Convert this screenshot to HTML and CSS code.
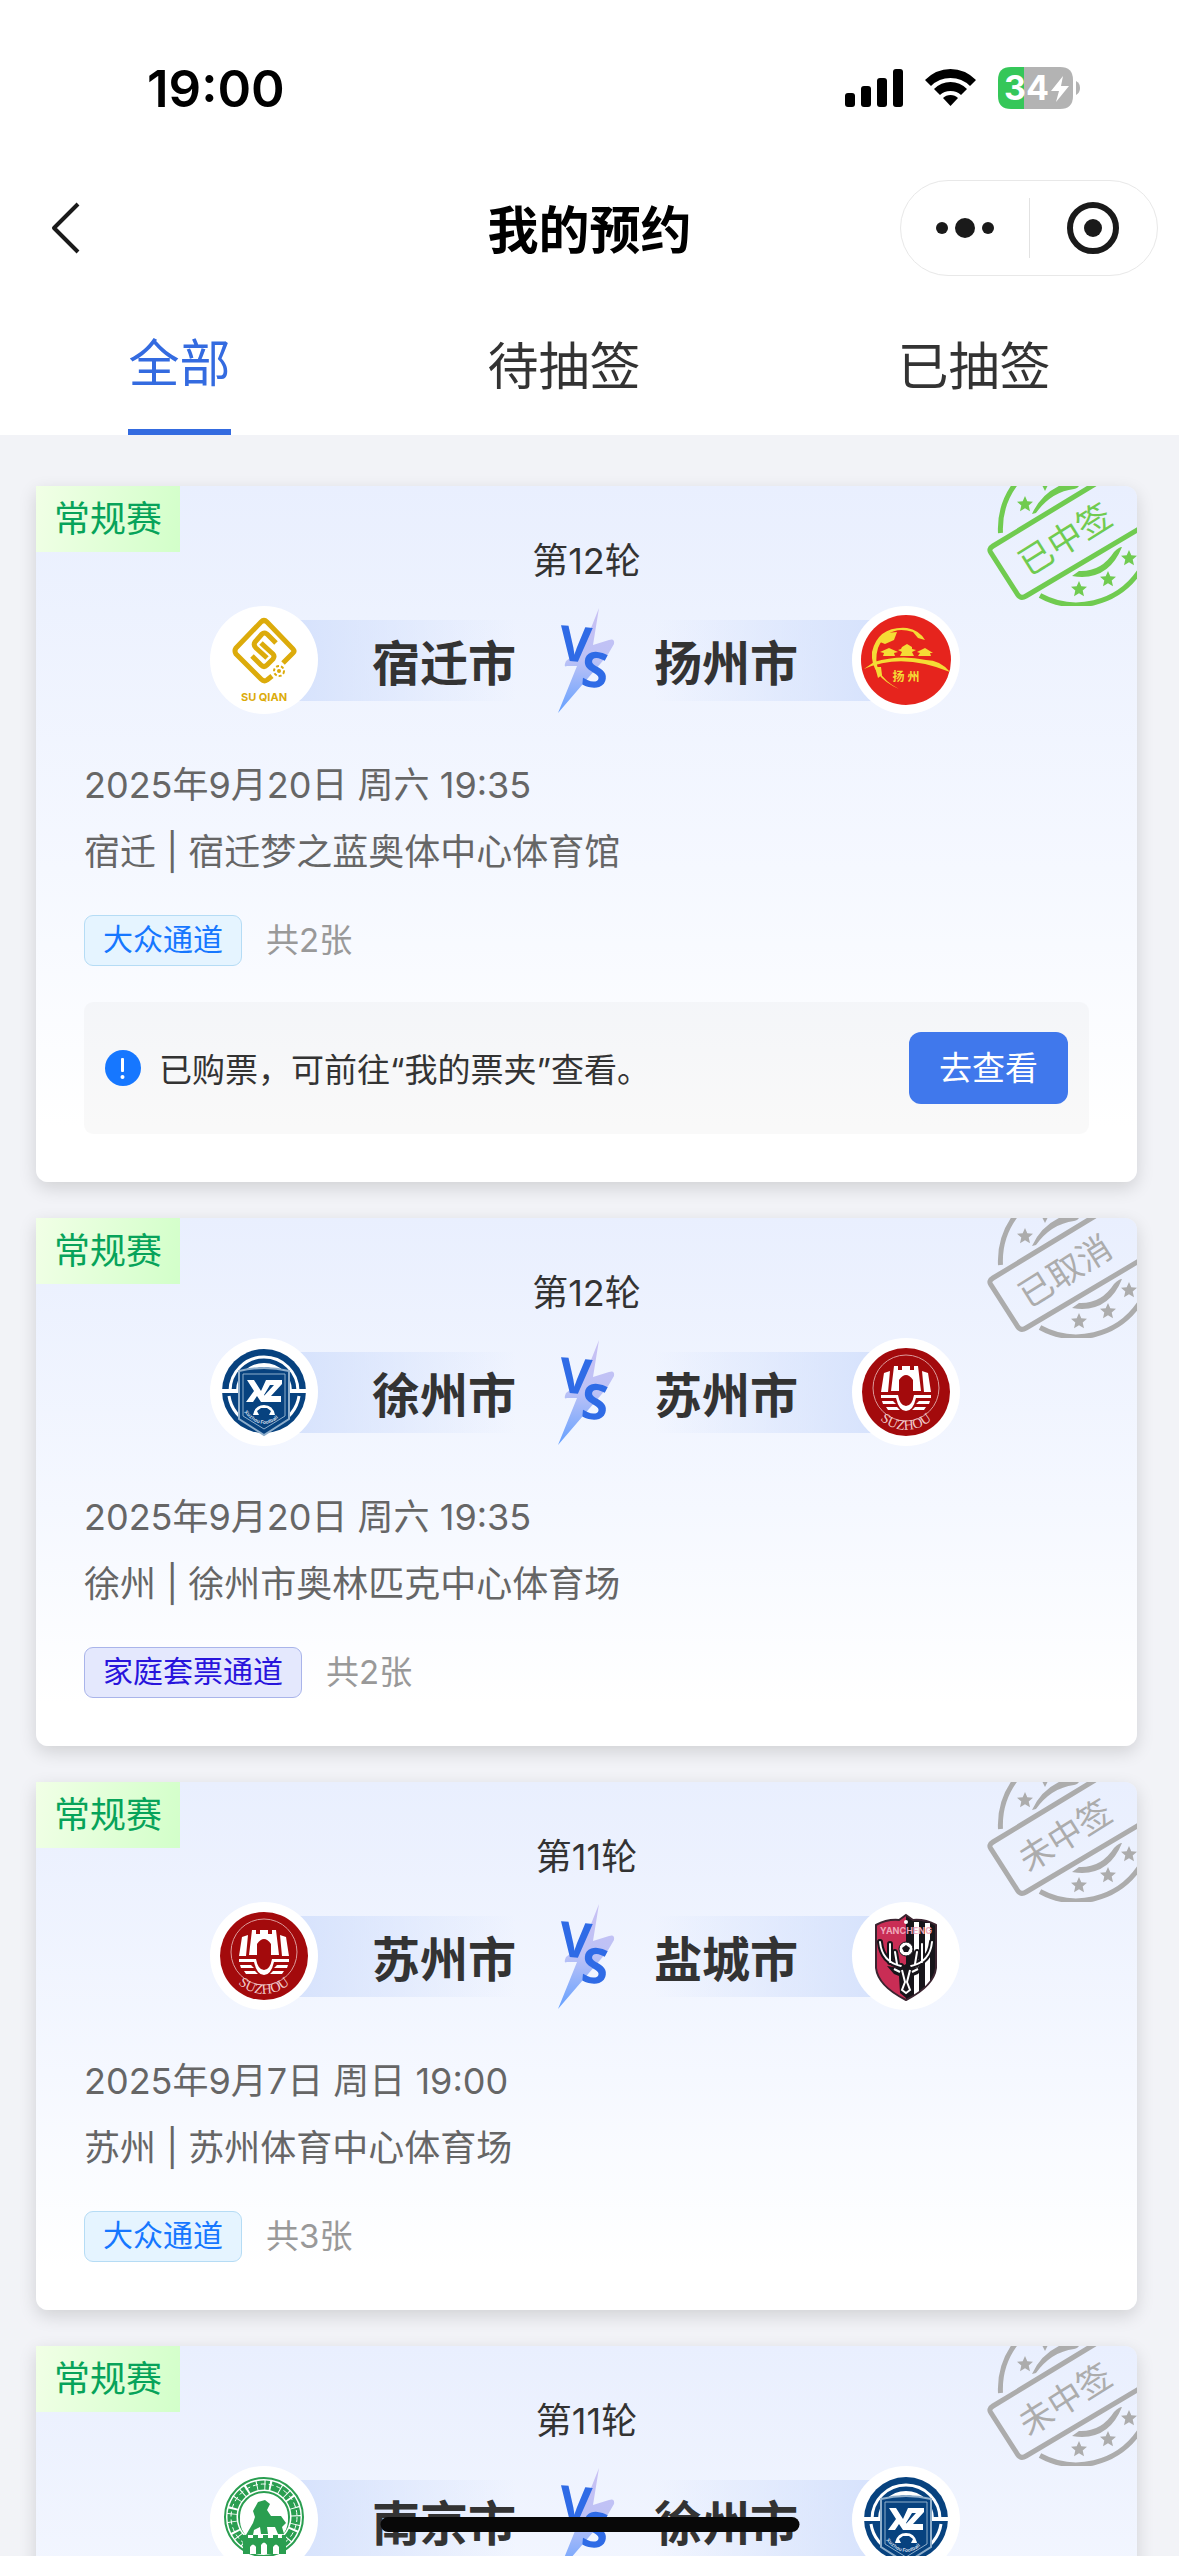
FILE: index.html
```html
<!DOCTYPE html>
<html lang="zh-CN">
<head>
    <meta charset="UTF-8">
    <title>我的预约</title>
    <meta name="viewport" content="width=device-width, initial-scale=1.0">
    <link rel="stylesheet" href="styles.css">
</head>
<body>

    <!-- gradients stop working inside display: none, so this one stays rendered -->
    <svg class="gradients" aria-hidden="true">
        <defs>
            <linearGradient id="boltFill" x1="0" y1="0" x2="0" y2="1">
                <stop offset="0" stop-color="#c9c0f3"/>
                <stop offset="0.5" stop-color="#bcc2f6"/>
                <stop offset="1" stop-color="#64a0ff"/>
            </linearGradient>
        </defs>
    </svg>

    <!-- shared graphics -->
    <svg class="sprites" aria-hidden="true">
        <defs>
            <path id="szArc" d="M18 66 A38 38 0 0 0 90 66"/>
            <path id="xzArc" d="M34 74 Q54 98 74 74"/>
            <path id="star" d="M0 -8 L2.3 -2.8 L8 -2.3 L3.7 1.5 L5 7.2 L0 4.2 L-5 7.2 L-3.7 1.5 L-8 -2.3 L-2.3 -2.8 Z"/>
        </defs>

        <symbol id="vs" viewBox="0 0 60 108">
            <path d="M44 2 L28 42 L11 55 Q8 62 12 60 L22 60 L3 107 L52 50 L59 38 Q60 32 54 34 L38 39 Z" fill="url(#boltFill)"/>
            <text class="vs-text" transform="translate(3 54) rotate(5)">V</text>
            <text class="vs-text" transform="translate(25 80) rotate(5)">S</text>
        </symbol>

        <symbol id="stamp" viewBox="0 0 150 120">
            <g fill="none" stroke="currentColor" stroke-width="5">
                <path d="M13.500 47 A76 76 0 0 1 29 -3"/>
                <path d="M53 109.500 A76 76 0 0 0 152 86"/>
                <path d="M108 -2 L6 60 Q1 63 4 67 L31 109 Q34 113 39 110 L152 43"/>
            </g>
            <g fill="currentColor">
                <path d="M45 28 Q54 8 74 -1 L92 -1 Q92 2 87 3 Q64 6 49 27 Z"/>
                <path d="M55 -1 L61 -1 L58 5 Z"/>
                <path d="M85 90 L92 85 Q114 86 127 66 Q132 61 135 61 Q121 96 85 90 Z"/>
                <use href="#star" x="38" y="18"/>
                <use href="#star" x="92" y="103"/>
                <use href="#star" x="121" y="93"/>
                <use href="#star" x="142" y="72"/>
            </g>
        </symbol>

        <!-- Suqian -->
        <symbol id="logo-sq" viewBox="0 0 108 108">
            <circle cx="54" cy="54" r="54" fill="#fff"/>
            <g fill="none" stroke="#dcab0b" stroke-width="5" stroke-linejoin="round">
                <path d="M73 57 L83 47 Q85 45 83 43 L57 16 Q54 13 51 16 L26 42 Q24 45 26 48 L51 73 Q54 76 57 74 L62 70"/>
                <path d="M66 37 L57 28 Q54 26 52 28 L45 36 Q43 39 46 42 L57 52"/>
                <path d="M51 37 L63 48 Q65 50 63 53 L57 59 Q54 62 51 59 L42 50"/>
            </g>
            <circle cx="69" cy="65" r="5" fill="#fff" stroke="#dcab0b" stroke-width="2" stroke-dasharray="3 2"/>
            <circle cx="69" cy="65" r="2" fill="#dcab0b"/>
            <text x="54" y="95" text-anchor="middle" class="logo-text" font-size="11" fill="#dcab0b">SU QIAN</text>
        </symbol>

        <!-- Yangzhou -->
        <symbol id="logo-yz" viewBox="0 0 108 108">
            <circle cx="54" cy="54" r="54" fill="#fff"/>
            <circle cx="54" cy="54" r="45" fill="#e6241d"/>
            <g fill="#f5dc35">
                <path d="M47 83 Q18 70 20 46 Q26 20 55 22 Q67 24 73 34 L66 32 L61 26 Q36 18 26 42 Q18 68 47 83 Z"/>
                <path d="M28 36 L34 27 L45 26 L42 34 L33 38 Z"/>
                <path d="M12 63 Q50 46 98 66 Q88 54 74 54 Q48 48 22 56 Z"/>
                <path d="M31 50 L43 50 L42 47 L46 46 L37 42 L28 46 L32 47 Z"/>
                <path d="M48 50 L62 50 L60 46 L64 44 L60 43 L60 41 L55 38 L50 41 L49 43 L46 44 L50 46 Z"/>
                <path d="M66 50 L79 50 L78 47 L81 47 L73 42 L65 46 L68 47 Z"/>
                <path d="M23 61 L29 61 L30 69 L26 72 Z"/>
                <text x="54" y="75" text-anchor="middle" class="logo-text" font-size="12">扬 州</text>
            </g>
        </symbol>

        <!-- Xuzhou -->
        <symbol id="logo-xz" viewBox="0 0 108 108">
            <circle cx="54" cy="54" r="54" fill="#fff"/>
            <circle cx="54" cy="53" r="42" fill="#07427f"/>
            <g fill="none" stroke="#fff">
                <path d="M20 53 A34 34 0 0 1 88 53" stroke-width="3"/>
                <path d="M28 53 A26 26 0 0 1 80 53" stroke-width="4"/>
                <path d="M19 58 A35 35 0 0 0 42 86" stroke-width="3"/>
                <path d="M89 58 A35 35 0 0 1 66 86" stroke-width="3"/>
                <path d="M10 53 H98" stroke-width="4"/>
            </g>
            <path d="M29 33 Q54 27 79 33 V81 L54 97 L29 81 Z" fill="#07427f" stroke="#8faecb" stroke-width="2"/>
            <path d="M33 36 H75 V78 L54 91 L33 78 Z" fill="none" stroke="#8faecb" stroke-width="1"/>
            <path d="M37 42 H44 L51 53 L56 42 H72 V46 L61 58 H71 V64 H53 V59 L64 47 H60 L54 57 L58 64 H51 L47 58 L43 64 H36 L44 53 Z" fill="#fff"/>
            <path d="M43 77 Q45 67 54 67 Q63 67 65 77 L59 77 L61 73 L57 70 H51 L47 73 L49 77 Z" fill="#fff"/>
            <text font-size="5" class="logo-text" fill="#c6d6e6"><textPath href="#xzArc">Xuzhou Football</textPath></text>
        </symbol>

        <!-- Suzhou -->
        <symbol id="logo-sz" viewBox="0 0 108 108">
            <circle cx="54" cy="54" r="54" fill="#fff"/>
            <circle cx="54" cy="54" r="44" fill="#a30a0c"/>
            <circle cx="54" cy="50" r="33" fill="none" stroke="#dc9b9b" stroke-width="1"/>
            <g fill="#fff">
                <path d="M39 53 L42 28 H46 V32 H50 V28 H58 V32 H62 V28 H66 L69 53 H61 V42 Q54 32 47 42 V53 Z"/>
                <path d="M36 54 H29 L32 35 L38 33 Z"/>
                <path d="M72 54 H79 L76 35 L70 33 Z"/>
                <path d="M29 57 H46 Q48 68 54 68 Q60 68 62 57 H79 V60 H64 Q61 73 54 73 Q47 73 44 60 H29 Z"/>
                <path d="M30 63 H41 L44 66 H31 Z M78 63 H67 L64 66 H77 Z M34 69 H45 L48 72 H36 Z M74 69 H63 L60 72 H72 Z"/>
            </g>
            <text font-size="14" class="suzhou-text" fill="#f0caca"><textPath href="#szArc" startOffset="50%" text-anchor="middle">SUZHOU</textPath></text>
        </symbol>

        <!-- Yancheng -->
        <symbol id="logo-yc" viewBox="0 0 108 108">
            <circle cx="54" cy="54" r="54" fill="#fff"/>
            <path d="M54 13 L61 18 Q73 17 84 23 V66 Q82 84 54 98 Q26 84 24 66 V23 Q35 17 47 18 Z" fill="#c92d55"/>
            <path d="M54 13 L61 18 Q73 17 84 23 V66 Q82 84 54 98 Z" fill="#17151a"/>
            <path d="M62 20 H67 V91 L62 94 Z M73 21 H78 V82 L73 87 Z" fill="#fff"/>
            <text x="54" y="32" text-anchor="middle" font-size="9" class="logo-text" fill="#f0a8bc">YANCHENG</text>
            <path d="M49 64 Q30 60 28 40 M38 60 V42 M45 62 L43 50 M59 64 Q78 60 80 40 M70 60 V42 M63 62 L65 50" fill="none" stroke="#17151a" stroke-width="6" stroke-linecap="round"/>
            <path d="M49 64 Q30 60 28 40 M38 60 V42 M45 62 L43 50 M59 64 Q78 60 80 40 M70 60 V42 M63 62 L65 50" fill="none" stroke="#fff" stroke-width="2" stroke-linecap="round"/>
            <circle cx="54" cy="47" r="7" fill="#fff" stroke="#17151a" stroke-width="1"/>
            <path d="M54 43 L58 46 L56 50 H52 L50 46 Z" fill="#17151a"/>
            <path d="M35 64 L47 66 L54 62 L61 66 L73 64 L66 72 L61 74 L60 91 L54 96 L48 91 L47 74 L42 72 Z" fill="#17151a"/>
            <path d="M42 67 L48 70 M66 67 L60 70 M50 68 L53 80 L50 88 L54 91 L58 88 L55 80 L58 68" fill="none" stroke="#fff" stroke-width="2"/>
            <path d="M54 13 L61 18 Q73 17 84 23 V66 Q82 84 54 98 Q26 84 24 66 V23 Q35 17 47 18 Z" fill="none" stroke="#3b2430" stroke-width="2"/>
            <circle cx="54" cy="20" r="2" fill="#fff"/>
        </symbol>

        <!-- Nanjing -->
        <symbol id="logo-nj" viewBox="0 0 108 108">
            <circle cx="54" cy="54" r="54" fill="#fff"/>
            <g fill="none" stroke="#2a9e50">
                <circle cx="54" cy="51" r="39" stroke-width="2"/>
                <circle cx="54" cy="51" r="32" stroke-width="9" stroke-dasharray="7 1 4 2 9 1"/>
                <circle cx="54" cy="51" r="25" stroke-width="2"/>
                <circle cx="54" cy="51" r="33" stroke="#fff" stroke-width="1" stroke-dasharray="5 3"/>
            </g>
            <circle cx="54" cy="54" r="24" fill="#fff"/>
            <path d="M48 36 L55 34 L60 38 L57 44 L61 50 L71 50 L76 57 L72 61 L74 68 H68 L65 61 L57 61 L58 68 H51 L50 61 L44 64 L43 69 H36 L43 57 L45 51 L43 45 Z" fill="#2a9e50"/>
            <path d="M33 69 H38 V72 H43 V69 H48 V72 H53 V69 H58 V72 H63 V69 H68 V72 H72 V69 H76 V88 H33 Z" fill="#2a9e50"/>
            <path d="M40 88 V81 Q43 76 46 81 V88 Z M51 88 V79 Q54 74 57 79 V88 Z M63 88 V81 Q66 76 69 81 V88 Z" fill="#fff"/>
            <text x="54" y="97" text-anchor="middle" font-size="9" class="logo-text" fill="#2a9e50">NANJING</text>
        </symbol>
    </svg>

    <header class="header">
        <div class="status-bar">
            <span class="time">19:00</span>
            <div class="status-icons">
                <svg width="58" height="38" viewBox="0 0 58 38">
                    <rect x="0" y="24" width="10" height="14" rx="3"/>
                    <rect x="16" y="17" width="10" height="21" rx="3"/>
                    <rect x="32" y="9" width="10" height="29" rx="3"/>
                    <rect x="48" y="0" width="10" height="38" rx="3"/>
                </svg>
                <svg width="51" height="38" viewBox="0 0 51 38">
                    <path d="M25.500 0 Q40 0 51 11 L45 17 Q37 9 25.500 9 Q14 9 6 17 L0 11 Q11 0 25.500 0 Z"/>
                    <path d="M25.500 13 Q35 13 42 20 L36 26 Q32 22 25.500 22 Q19 22 15 26 L9 20 Q16 13 25.500 13 Z"/>
                    <path d="M25.500 26 Q30 26 33 29 L25.500 37 L18 29 Q21 26 25.500 26 Z"/>
                </svg>
                <svg class="battery" width="83" height="42" viewBox="0 0 83 42">
                    <path d="M13 0 H26 V42 H13 Q0 42 0 29 V13 Q0 0 13 0 Z" fill="#35c759"/>
                    <path d="M26 0 H62 Q75 0 75 13 V29 Q75 42 62 42 H26 Z" fill="#b3b3b3"/>
                    <path d="M78 14 Q82 16 82 21 Q82 26 78 28 Z" fill="#b3b3b3"/>
                    <text x="6" y="33" class="battery-text">34</text>
                    <path d="M65 9 L53 24 H61 L58 35 L71 19 H63 Z" fill="#fff"/>
                </svg>
            </div>
        </div>

        <div class="nav-bar">
            <button class="back" aria-label="返回">
                <svg width="30" height="52" viewBox="0 0 30 52"><path d="M27 2 L3 26 L27 50" fill="none" stroke="#1a1a1a" stroke-width="4" stroke-linejoin="round"/></svg>
            </button>
            <h1>我的预约</h1>
            <div class="capsule">
                <button aria-label="更多">
                    <svg width="58" height="20" viewBox="0 0 58 20" fill="#1a1a1a"><circle cx="6" cy="10" r="6"/><circle cx="29" cy="10" r="10"/><circle cx="52" cy="10" r="6"/></svg>
                </button>
                <button aria-label="关闭">
                    <svg width="52" height="52" viewBox="0 0 52 52"><circle cx="26" cy="26" r="23" fill="none" stroke="#1a1a1a" stroke-width="6"/><circle cx="26" cy="26" r="9" fill="#1a1a1a"/></svg>
                </button>
            </div>
        </div>

        <nav class="tabs">
            <button class="tab active">全部</button>
            <button class="tab">待抽签</button>
            <button class="tab">已抽签</button>
        </nav>
    </header>

    <main class="list">
        <section class="card">
            <span class="tag">常规赛</span>
            <svg class="stamp won" viewBox="0 0 150 120"><use href="#stamp"/><text x="0" y="0" transform="translate(78 53) rotate(-32)">已中签</text></svg>
            <p class="round">第12轮</p>
            <div class="match">
                <div class="team home"><svg class="logo"><use href="#logo-sq"/></svg><span>宿迁市</span></div>
                <svg class="vs"><use href="#vs"/></svg>
                <div class="team away"><span>扬州市</span><svg class="logo"><use href="#logo-yz"/></svg></div>
            </div>
            <div class="info">
                <p>2025年9月20日 周六 19:35</p>
                <p>宿迁 | 宿迁梦之蓝奥体中心体育馆</p>
            </div>
            <div class="channel"><span class="chip">大众通道</span><span class="count">共2张</span></div>
            <div class="notice">
                <svg width="36" height="36" viewBox="0 0 36 36"><circle cx="18" cy="18" r="18" fill="#1677ff"/><rect x="16" y="8" width="3" height="14" rx="1" fill="#fff"/><circle cx="17.500" cy="27" r="2" fill="#fff"/></svg>
                <p>已购票，可前往“我的票夹”查看。</p>
                <button class="go">去查看</button>
            </div>
        </section>

        <section class="card">
            <span class="tag">常规赛</span>
            <svg class="stamp" viewBox="0 0 150 120"><use href="#stamp"/><text x="0" y="0" transform="translate(78 53) rotate(-32)">已取消</text></svg>
            <p class="round">第12轮</p>
            <div class="match">
                <div class="team home"><svg class="logo"><use href="#logo-xz"/></svg><span>徐州市</span></div>
                <svg class="vs"><use href="#vs"/></svg>
                <div class="team away"><span>苏州市</span><svg class="logo"><use href="#logo-sz"/></svg></div>
            </div>
            <div class="info">
                <p>2025年9月20日 周六 19:35</p>
                <p>徐州 | 徐州市奥林匹克中心体育场</p>
            </div>
            <div class="channel"><span class="chip family">家庭套票通道</span><span class="count">共2张</span></div>
        </section>

        <section class="card">
            <span class="tag">常规赛</span>
            <svg class="stamp" viewBox="0 0 150 120"><use href="#stamp"/><text x="0" y="0" transform="translate(78 53) rotate(-32)">未中签</text></svg>
            <p class="round">第11轮</p>
            <div class="match">
                <div class="team home"><svg class="logo"><use href="#logo-sz"/></svg><span>苏州市</span></div>
                <svg class="vs"><use href="#vs"/></svg>
                <div class="team away"><span>盐城市</span><svg class="logo"><use href="#logo-yc"/></svg></div>
            </div>
            <div class="info">
                <p>2025年9月7日 周日 19:00</p>
                <p>苏州 | 苏州体育中心体育场</p>
            </div>
            <div class="channel"><span class="chip">大众通道</span><span class="count">共3张</span></div>
        </section>

        <section class="card next">
            <span class="tag">常规赛</span>
            <svg class="stamp" viewBox="0 0 150 120"><use href="#stamp"/><text x="0" y="0" transform="translate(78 53) rotate(-32)">未中签</text></svg>
            <p class="round">第11轮</p>
            <div class="match">
                <div class="team home"><svg class="logo"><use href="#logo-nj"/></svg><span>南京市</span></div>
                <svg class="vs"><use href="#vs"/></svg>
                <div class="team away"><span>徐州市</span><svg class="logo"><use href="#logo-xz"/></svg></div>
            </div>
        </section>
    </main>

    <div class="home-indicator"></div>

</body>
</html>
```
FILE: styles.css
```css
* {
    box-sizing: border-box;
    margin: 0;
    padding: 0;
}

body {
    display: flex;
    flex-direction: column;
    height: 100vh;
    overflow: hidden;
    background: #f2f3f7;
    color: #333;
    font-family: Inter, "Noto Sans CJK SC", sans-serif;
    font-size: 36px;
}

button {
    border: 0;
    background: none;
    font: inherit;
    color: inherit;
    cursor: pointer;
}

svg {
    display: block;
    flex-shrink: 0;
}

.gradients {
    position: absolute;
    width: 0;
    height: 0;
}

.sprites {
    display: none;
}

.header {
    flex-shrink: 0;
    background: #fff;
}

/* status bar */
.status-bar {
    display: flex;
    align-items: center;
    justify-content: space-between;
    height: 176px;
    padding: 0 98px 0 147px;
}

.time {
    color: #000;
    font-size: 51px;
    font-weight: 600;
}

.status-icons {
    display: flex;
    align-items: center;
    gap: 22px;
}

.battery {
    overflow: visible;
}

.battery-text {
    font-size: 34px;
    font-weight: 700;
    fill: #fff;
}

/* title */
.nav-bar {
    display: grid;
    grid-template-columns: 1fr auto 1fr;
    align-items: center;
    height: 104px;
    padding: 0 21px 0 51px;
}

.nav-bar h1 {
    grid-column: 2;
    color: #000;
    font-size: 51px;
    font-weight: 700;
    padding: 0 30px 3px 0;
}

.back {
    justify-self: start;
}

.capsule {
    justify-self: end;
    display: flex;
    align-items: center;
    width: 258px;
    height: 96px;
    border: 1px solid #e8e8e8;
    border-radius: 48px;
}

.capsule button {
    flex: 1;
    display: flex;
    align-items: center;
    justify-content: center;
    height: 60px;
}

.capsule button + button {
    border-left: 1px solid #e2e2e2;
}

/* tabs */
.tabs {
    display: flex;
    justify-content: space-around;
    padding-top: 14px;
}

.tab {
    height: 141px;
    padding-bottom: 4px;
    font-size: 51px;
}

.tab.active {
    color: #346be0;
    border-bottom: 6px solid #346be0;
}

/* cards */
.list {
    flex: 1;
    min-height: 0;
    overflow: hidden;
    padding: 51px 42px 0 36px;
    display: flex;
    flex-direction: column;
    gap: 36px;
}

.card {
    position: relative;
    flex-shrink: 0;
    padding: 48px;
    border-radius: 0 12px 12px 12px;
    background: linear-gradient(#e9effe, #f5f8ff 55%, #fff 92%);
    box-shadow: 0 6px 18px rgba(0, 0, 0, 0.14);
}

.card.next {
    padding-bottom: 300px;
}

.tag {
    position: absolute;
    top: 0;
    left: 0;
    padding: 0 18px;
    height: 66px;
    line-height: 66px;
    color: #07a35a;
    background: linear-gradient(100deg, #f1ffe6, #d2ffc9);
}

.stamp {
    position: absolute;
    top: 0;
    right: 0;
    width: 150px;
    height: 120px;
    overflow: hidden;
    border-top-right-radius: 12px;
    color: #acacac;
}

.stamp.won {
    color: #70cb50;
}

.stamp text {
    fill: currentColor;
    font-size: 34px;
    font-weight: 400;
    text-anchor: middle;
    dominant-baseline: central;
}

.round {
    padding-top: 2px;
    line-height: 51px;
    text-align: center;
}

.match {
    display: flex;
    align-items: center;
    justify-content: center;
    gap: 39px;
    margin-top: 19px;
    padding-right: 3px;
}

.team {
    display: flex;
    align-items: center;
    gap: 54px;
    font-size: 48px;
    font-weight: 700;
    background-repeat: no-repeat;
    background-size: calc(100% - 54px) 81px;
}

.team.home {
    background-image: linear-gradient(90deg, #d3e0fc, rgba(240, 243, 255, 0));
    background-position: right center;
}

.team.away {
    background-image: linear-gradient(270deg, #d3e0fc, rgba(240, 243, 255, 0));
    background-position: left center;
}

.logo {
    width: 108px;
    height: 108px;
}

.logo-text {
    font-family: Inter, "Noto Sans CJK SC", sans-serif;
    font-weight: 700;
}

.suzhou-text {
    font-family: "Liberation Serif", serif;
    font-weight: 400;
}

.vs {
    width: 60px;
    height: 108px;
}

.vs-text {
    font-family: "Open Sans", sans-serif;
    font-size: 49px;
    font-weight: 700;
    fill: #2f6be6;
}

.info {
    display: flex;
    flex-direction: column;
    gap: 16px;
    margin-top: 46px;
    color: #666;
    line-height: 51px;
}

.channel {
    display: flex;
    align-items: center;
    gap: 24px;
    margin-top: 37px;
}

.chip {
    height: 51px;
    padding: 0 18px;
    border: 1px solid #b5dcf5;
    border-radius: 9px;
    background: #e5f4ff;
    color: #1677ff;
    font-size: 30px;
    line-height: 47px;
}

.chip.family {
    border-color: #a9b4ea;
    background: #e4e8fd;
    color: #2814dc;
}

.count {
    color: #999;
    font-size: 33px;
    line-height: 51px;
}

.notice {
    display: flex;
    align-items: center;
    margin-top: 36px;
    padding: 30px 21px;
    border-radius: 9px;
    background: rgba(0, 0, 0, 0.025);
    font-size: 33px;
}

.notice p {
    flex: 1;
    margin-left: 18px;
}

.go {
    height: 72px;
    padding: 0 30px 4px;
    border-radius: 12px;
    background: #4078ec;
    color: #fff;
}

.home-indicator {
    position: fixed;
    left: 50%;
    bottom: 24px;
    width: 419px;
    height: 15px;
    border-radius: 8px;
    background: #080808;
    transform: translateX(-50%);
}
```
